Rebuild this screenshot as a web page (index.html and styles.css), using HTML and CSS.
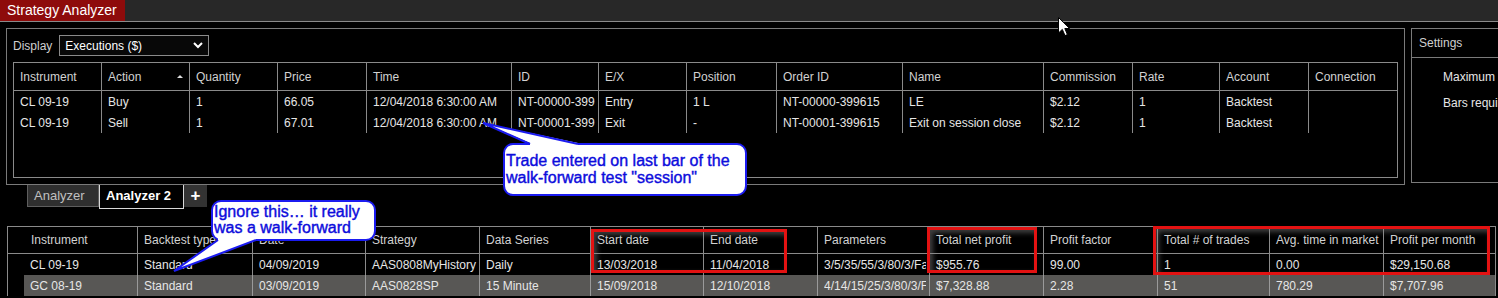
FILE: index.html
```html
<!DOCTYPE html>
<html lang="en">
<head>
  <meta charset="UTF-8">
  <meta name="viewport" content="width=device-width, initial-scale=1.0">
  <title>Strategy Analyzer</title>
  <link rel="stylesheet" href="styles.css">
</head>
<body>

  <div class="topbar">
    <div class="title-tab">Strategy Analyzer</div>
  </div>

  <div class="workspace">
    <div class="exec-panel">
      <div class="display-row">
        <span class="display-label">Display</span>
        <div class="select">
          <span>Executions ($)</span>
          <svg class="chevron" width="10" height="7" viewBox="0 0 10 7">
            <polyline points="1,1 5,5 9,1" fill="none" stroke="#fff" stroke-width="2"/>
          </svg>
        </div>
      </div>

      <div class="exec-table">
        <div class="exec-row exec-head">
          <div class="cell">Instrument</div>
          <div class="cell sorted">Action<span class="sort-arrow"></span></div>
          <div class="cell">Quantity</div>
          <div class="cell">Price</div>
          <div class="cell">Time</div>
          <div class="cell">ID</div>
          <div class="cell">E/X</div>
          <div class="cell">Position</div>
          <div class="cell">Order ID</div>
          <div class="cell">Name</div>
          <div class="cell">Commission</div>
          <div class="cell">Rate</div>
          <div class="cell">Account</div>
          <div class="cell">Connection</div>
        </div>
        <div class="exec-row">
          <div class="cell">CL 09-19</div>
          <div class="cell">Buy</div>
          <div class="cell">1</div>
          <div class="cell">66.05</div>
          <div class="cell">12/04/2018 6:30:00 AM</div>
          <div class="cell"><span class="clip">NT-00000-399615</span></div>
          <div class="cell">Entry</div>
          <div class="cell">1 L</div>
          <div class="cell">NT-00000-399615</div>
          <div class="cell">LE</div>
          <div class="cell">$2.12</div>
          <div class="cell">1</div>
          <div class="cell">Backtest</div>
          <div class="cell"></div>
        </div>
        <div class="exec-row">
          <div class="cell">CL 09-19</div>
          <div class="cell">Sell</div>
          <div class="cell">1</div>
          <div class="cell">67.01</div>
          <div class="cell">12/04/2018 6:30:00 AM</div>
          <div class="cell"><span class="clip">NT-00001-399615</span></div>
          <div class="cell">Exit</div>
          <div class="cell">-</div>
          <div class="cell">NT-00001-399615</div>
          <div class="cell">Exit on session close</div>
          <div class="cell">$2.12</div>
          <div class="cell">1</div>
          <div class="cell">Backtest</div>
          <div class="cell"></div>
        </div>
      </div>
    </div>

    <div class="settings-panel">
      <div class="settings-head">Settings</div>
      <div class="settings-item">Maximum bars look back</div>
      <div class="settings-item">Bars required to trade</div>
    </div>
  </div>

  <div class="tabs">
    <div class="tab">Analyzer</div>
    <div class="tab tab-active">Analyzer 2</div>
    <div class="tab tab-add">+</div>
  </div>

  <div class="results">
    <div class="res-row res-head">
      <div class="cell first">Instrument</div>
      <div class="cell">Backtest type</div>
      <div class="cell">Date</div>
      <div class="cell">Strategy</div>
      <div class="cell">Data Series</div>
      <div class="cell">Start date</div>
      <div class="cell">End date</div>
      <div class="cell">Parameters</div>
      <div class="cell">Total net profit</div>
      <div class="cell">Profit factor</div>
      <div class="cell">Total # of trades</div>
      <div class="cell">Avg. time in market</div>
      <div class="cell">Profit per month</div>
    </div>
    <div class="res-row">
      <div class="indicator"></div>
      <div class="cell">CL 09-19</div>
      <div class="cell">Standard</div>
      <div class="cell">04/09/2019</div>
      <div class="cell">AAS0808MyHistory</div>
      <div class="cell">Daily</div>
      <div class="cell">13/03/2018</div>
      <div class="cell">11/04/2018</div>
      <div class="cell"><span class="clip">3/5/35/55/3/80/3/False</span></div>
      <div class="cell">$955.76</div>
      <div class="cell">99.00</div>
      <div class="cell">1</div>
      <div class="cell">0.00</div>
      <div class="cell">$29,150.68</div>
    </div>
    <div class="res-row res-alt">
      <div class="indicator"></div>
      <div class="cell">GC 08-19</div>
      <div class="cell">Standard</div>
      <div class="cell">03/09/2019</div>
      <div class="cell">AAS0828SP</div>
      <div class="cell">15 Minute</div>
      <div class="cell">15/09/2018</div>
      <div class="cell">12/10/2018</div>
      <div class="cell"><span class="clip">4/14/15/25/3/80/3/False</span></div>
      <div class="cell">$7,328.88</div>
      <div class="cell">2.28</div>
      <div class="cell">51</div>
      <div class="cell">780.29</div>
      <div class="cell">$7,707.96</div>
    </div>
  </div>

  <!-- annotations drawn over the screenshot -->
  <div class="mark mark-dates"></div>
  <div class="mark mark-profit"></div>
  <div class="mark mark-trades"></div>

  <div class="callout callout-trade">Trade entered on last bar of the<br>walk-forward test "session"</div>
  <div class="callout callout-ignore">Ignore this… it really<br>was a walk-forward</div>

  <svg class="tails" width="1498" height="298" viewBox="0 0 1498 298">
    <polygon points="483,123 530,143 530,149 578,149 578,143" fill="#fff"/>
    <polyline points="530,144 483,123 578,144" fill="none" stroke="#1b1bf0" stroke-width="2"/>
    <polygon points="174,271 218,240 218,235 256,235 256,240" fill="#fff"/>
    <polyline points="218,240 174,271 256,240" fill="none" stroke="#1b1bf0" stroke-width="2"/>
  </svg>

  <svg class="cursor" width="13" height="20" viewBox="0 0 13 20">
    <path d="M0.5,0.5 L0.5,16 L4.3,12.4 L7,18.6 L9.4,17.6 L6.8,11.5 L11.6,11.5 Z" fill="#fff" stroke="#000" stroke-width="1"/>
  </svg>

</body>
</html>
```

FILE: styles.css
```css
* {
  margin: 0;
  padding: 0;
  box-sizing: border-box;
}
body {
  font-family: "Liberation Sans", Arial, sans-serif;
  font-size: 12px;
  color: #e6e6e6;
  background-color: #000;
  width: 1498px;
  height: 298px;
  overflow: hidden;
  position: relative;
}

/* title strip */
.topbar {
  height: 22px;
  background-color: #282828;
  border-bottom: 1px solid #8a8a8a;
}
.title-tab {
  width: 125px;
  height: 21px;
  line-height: 21px;
  padding-left: 7px;
  background-color: #8e0b0b;
  color: #fff;
  font-size: 14px;
}

.workspace {
  display: flex;
  align-items: flex-start;
  gap: 6px;
  padding: 6px 0 0 6px;
}
.exec-panel {
  flex: none;
  width: 1399px;
  height: 157px;
  border: 1px solid #7a7a7a;
  padding: 6px 6px 0 6px;
}
.display-row {
  display: flex;
  align-items: center;
  gap: 7px;
  height: 21px;
}
.display-label {
  color: #cfcfcf;
}
.select {
  width: 150px;
  height: 21px;
  border: 1px solid #8a8a8a;
  background-color: #080808;
  display: flex;
  align-items: center;
  justify-content: space-between;
  padding: 0 5px;
  color: #fff;
}

.exec-table {
  margin-top: 6px;
  height: 116px;
  border: 1px solid #8a8a8a;
}
.exec-row {
  display: grid;
  grid-template-columns: 88px 88px 88px 89px 145px 87px 88px 90px 126px 141px 89px 87px 89px 88px;
  height: 21px;
}
.exec-head {
  height: 28px;
  border-bottom: 1px solid #8a8a8a;
  color: #d2d2d2;
}
.cell {
  display: flex;
  align-items: center;
  padding-left: 6px;
  border-right: 1px solid #8a8a8a;
  white-space: nowrap;
  overflow: hidden;
}
.clip {
  display: block;
  width: 100%;
  margin-right: 3px;
  overflow: hidden;
}
.exec-row .cell:last-child {
  border-right: none;
}
.sorted {
  position: relative;
}
.sort-arrow {
  position: absolute;
  right: 6px;
  top: 12px;
  border-left: 3px solid transparent;
  border-right: 3px solid transparent;
  border-bottom: 3px solid #ddd;
}

.settings-panel {
  flex: none;
  width: 120px;
  height: 155px;
  border: 1px solid #7a7a7a;
}
.settings-head {
  height: 29px;
  line-height: 28px;
  padding-left: 7px;
  border-bottom: 1px solid #7a7a7a;
  color: #cfcfcf;
}
.settings-item {
  line-height: 26px;
  padding-left: 31px;
  white-space: nowrap;
}
.settings-head + .settings-item {
  margin-top: 6px;
}

/* analyzer tabs */
.tabs {
  display: flex;
  align-items: flex-start;
  height: 24px;
  margin-left: 27px;
}
.tab {
  height: 22px;
  line-height: 21px;
  padding-left: 6px;
  width: 72px;
  background-color: #2f2f2f;
  border: 1px solid #5e5e5e;
  border-top: none;
  color: #c0c0c0;
  font-size: 13px;
}
.tab-active {
  width: 85px;
  height: 24px;
  line-height: 22px;
  background-color: #000;
  border-color: #d8d8d8;
  color: #fff;
  font-weight: bold;
}
.tab-add {
  width: 23px;
  padding: 0;
  text-align: center;
  border: none;
  background-color: #333;
  color: #fff;
  font-size: 17px;
  font-weight: bold;
}

/* results grid */
.results {
  margin: 17px 0 0 7px;
  width: 1489px;
  border: 1px solid #8a8a8a;
  border-bottom: none;
}
.res-row {
  display: grid;
  grid-template-columns: 16px 114px 115px 113px 114px 111px 113px 114px 112px 114px 114px 112px 114px 111px;
  height: 21px;
}
.res-head {
  height: 27px;
  border-bottom: 1px solid #8a8a8a;
  color: #d2d2d2;
}
.res-head .first {
  grid-column: span 2;
  padding-left: 23px;
}
.res-row .cell:last-child {
  border-right: none;
}
.res-alt .cell {
  background-color: #585755;
  border-right-color: #9a9a9a;
}

/* red highlight boxes */
.mark {
  position: absolute;
  border: 3px solid #e31212;
  box-shadow: inset 3px 3px 5px rgba(140, 140, 140, 0.45);
}
.mark-dates {
  left: 591px;
  top: 229px;
  width: 196px;
  height: 44px;
}
.mark-profit {
  left: 927px;
  top: 227px;
  width: 110px;
  height: 46px;
}
.mark-trades {
  left: 1153px;
  top: 226px;
  width: 337px;
  height: 49px;
}

/* speech bubbles */
.callout {
  position: absolute;
  background-color: #fff;
  border: 2px solid #1b1bf0;
  border-radius: 10px;
  color: #0c0cdc;
  font-size: 16px;
  line-height: 17px;
  white-space: nowrap;
  -webkit-text-stroke: 0.4px #0c0cdc;
}
.callout-trade {
  left: 503px;
  top: 143px;
  width: 244px;
  height: 53px;
  padding: 7px 2px 0 1px;
}
.callout-ignore {
  left: 211px;
  top: 200px;
  width: 165px;
  height: 41px;
  padding: 2px 1px 0 1px;
  line-height: 16px;
}
.tails {
  position: absolute;
  left: 0;
  top: 0;
}
.cursor {
  position: absolute;
  left: 1058px;
  top: 17px;
}
```
